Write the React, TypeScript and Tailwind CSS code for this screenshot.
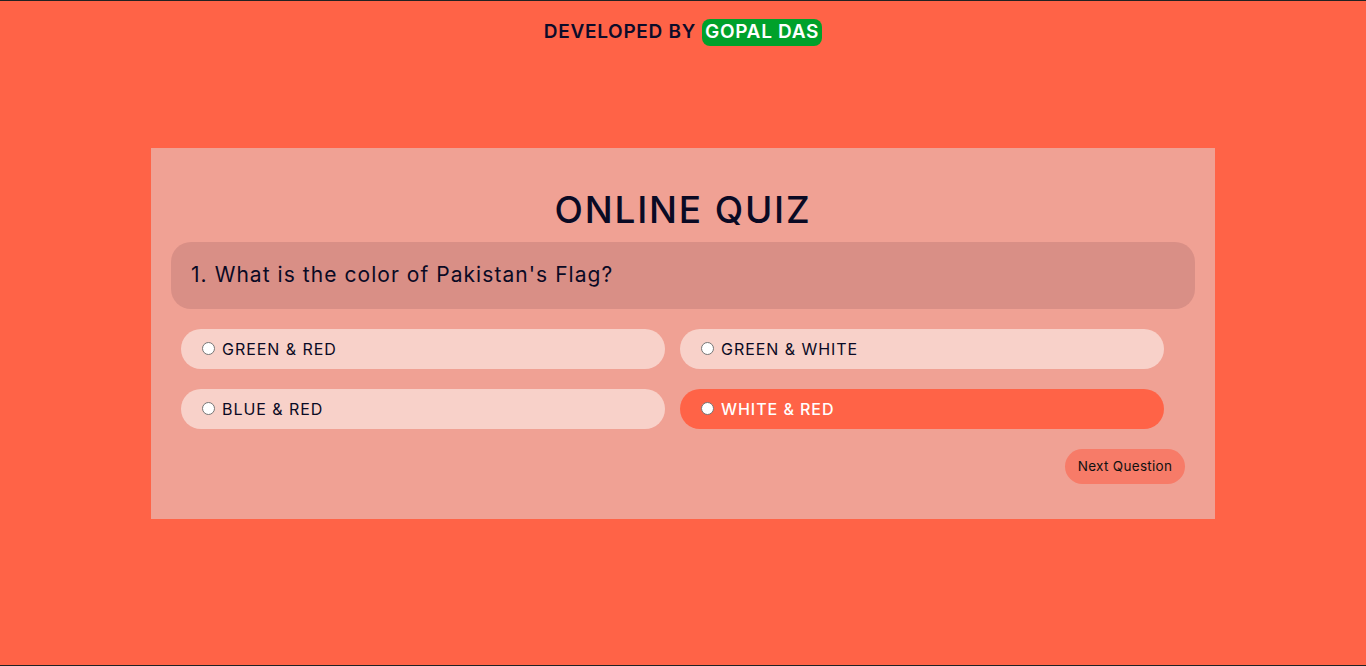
import React from "react";

const options = [
  { label: "GREEN & RED", selected: false },
  { label: "GREEN & WHITE", selected: false },
  { label: "BLUE & RED", selected: false },
  { label: "WHITE & RED", selected: true },
];

function Radio() {
  return (
    <span className="w-[13px] h-[13px] rounded-full bg-white border border-[#767676] shrink-0" />
  );
}

export default function App() {
  return (
    <div className="w-[1366px] h-[666px] bg-[#ff6347] border-t border-t-[#222] border-b border-b-[#222] flex flex-col items-center [font-family:Inter,'Open_Sans',sans-serif] overflow-hidden">
      <div className="mt-[17px] flex items-center font-semibold text-[19px] text-[#0c0c2a] tracking-[0.7px]">
        <span>DEVELOPED BY</span>
        <span className="ml-[6px] bg-[#00a12b] text-white rounded-[8px] px-[3px] h-[27px] flex items-center">GOPAL DAS</span>
      </div>
      <div className="mt-[101px] w-[1064px] h-[371px] bg-[#f0a194] flex flex-col">
        <h1 className="mt-[42px] text-center text-[37px] leading-[40px] font-medium text-[#0a0a24] tracking-[1.8px]">ONLINE QUIZ</h1>
        <div className="mt-[12px] mx-[20px] h-[67px] rounded-[20px] bg-[#d98f86] flex items-center pl-[20px] text-[21px] tracking-[1.05px] text-[#0a0a24]">
          1. What is the color of Pakistan's Flag?
        </div>
        <div className="mt-[20px] pl-[30px] grid grid-cols-[484px_484px] gap-x-[15px] gap-y-[20px]">
          {options.map((o) => (
            <div
              key={o.label}
              className={`h-[40px] rounded-full flex items-center pl-[21px] gap-[7px] text-[16px] tracking-[0.95px] ${
                o.selected ? "bg-[#ff6347] text-white font-medium" : "bg-[#f8d1c9] text-[#0a0a24]"
              }`}
            >
              <Radio />
              <span>{o.label}</span>
            </div>
          ))}
        </div>
        <div className="mt-[20px] flex justify-end pr-[30px]">
          <button className="h-[35px] w-[120px] rounded-full bg-[#f77b68] text-[13.5px] tracking-[0.3px] text-[#111]">
            Next Question
          </button>
        </div>
      </div>
    </div>
  );
}
